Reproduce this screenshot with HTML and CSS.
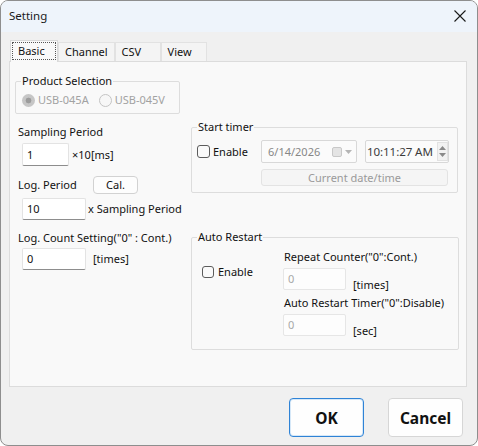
FILE: index.html
```html
<!DOCTYPE html>
<html lang="en">
<head>
<meta charset="UTF-8">
<title>Setting</title>
<link rel="stylesheet" href="styles.css">
</head>
<body>

<div class="window">
  <div class="titlebar">
    <span class="title">Setting</span>
    <svg class="close" width="12" height="12" viewBox="0 0 12 12">
      <path d="M0.5 0.5 L11.5 11.5 M11.5 0.5 L0.5 11.5" stroke="#1a1a1a" stroke-width="1.1" fill="none"/>
    </svg>
  </div>

  <div class="client">
    <div class="tabs">
      <div class="tab active"><span class="focus">Basic</span></div>
      <div class="tab">Channel</div>
      <div class="tab">CSV</div>
      <div class="tab">View</div>
    </div>

    <div class="panel">
      <div class="col-left">
        <div class="group product">
          <div class="legend">Product Selection</div>
          <div class="radios">
            <span class="radio checked"></span><span class="dim">USB-045A</span>
            <span class="radio second"></span><span class="dim">USB-045V</span>
          </div>
        </div>

        <div class="label first">Sampling Period</div>
        <div class="field">
          <div class="input w-small">1</div>
          <span class="suffix">×10[ms]</span>
        </div>

        <div class="label-row">
          <span class="label-inline">Log. Period</span>
          <button class="cal">Cal.</button>
        </div>
        <div class="field tight">
          <div class="input w-mid">10</div>
          <span class="suffix near">x Sampling Period</span>
        </div>

        <div class="label">Log. Count Setting("0" : Cont.)</div>
        <div class="field close-top">
          <div class="input w-mid">0</div>
          <span class="suffix far">[times]</span>
        </div>
      </div>

      <div class="col-right">
        <div class="group timer">
          <div class="legend">Start timer</div>
          <div class="timer-row">
            <label class="check"><span class="box"></span>Enable</label>
            <div class="picker date">
              <span class="date-text">6/14/2026</span>
              <span class="cal-icon"></span>
              <svg class="drop" width="7" height="4" viewBox="0 0 7 4"><path d="M0 0 L7 0 L3.5 4 Z" fill="#b5b5b5"/></svg>
            </div>
            <div class="picker time">
              <span class="time-text">10:11:27 AM</span>
              <div class="spin">
                <svg width="7" height="4" viewBox="0 0 7 4"><path d="M0 4 L7 4 L3.5 0 Z" fill="#8a8a8a"/></svg>
                <svg width="7" height="4" viewBox="0 0 7 4"><path d="M0 0 L7 0 L3.5 4 Z" fill="#8a8a8a"/></svg>
              </div>
            </div>
          </div>
          <div class="now-btn">Current date/time</div>
        </div>

        <div class="group restart">
          <div class="legend">Auto Restart</div>
          <div class="restart-body">
            <label class="check restart-check"><span class="box"></span>Enable</label>
            <div class="restart-fields">
              <div class="label-plain">Repeat Counter("0":Cont.)</div>
              <div class="field bottom">
                <div class="input disabled">0</div>
                <span class="suffix low">[times]</span>
              </div>
              <div class="label-plain second">Auto Restart Timer("0":Disable)</div>
              <div class="field bottom">
                <div class="input disabled">0</div>
                <span class="suffix low">[sec]</span>
              </div>
            </div>
          </div>
        </div>
      </div>
    </div>

    <div class="footer">
      <button class="btn ok">OK</button>
      <button class="btn">Cancel</button>
    </div>
  </div>
</div>

</body>
</html>
```

FILE: styles.css
```css
* {
  box-sizing: border-box;
}

body {
  margin: 0;
  background: #fff;
  font-family: "Noto Sans", "Open Sans", sans-serif;
  font-size: 11px;
  line-height: 16px;
  color: #111;
}

.window {
  width: 478px;
  height: 446px;
  border: 1px solid #8e8e8e;
  border-radius: 8px;
  background: #f0f0f0;
  overflow: hidden;
  display: flex;
  flex-direction: column;
}

.titlebar {
  height: 31px;
  flex: none;
  background: #eef4fb;
  display: flex;
  align-items: center;
  justify-content: space-between;
  padding: 0 11px 2px 8px;
}

.title {
  font-size: 11.5px;
  color: #1a1a1a;
}

.client {
  flex: 1;
  padding: 8px 10px 0 8px;
  display: flex;
  flex-direction: column;
}

/* tabs */
.tabs {
  display: flex;
  align-items: flex-end;
  height: 21px;
  padding-left: 1px;
}

.tab {
  height: 19px;
  min-width: 46px;
  padding: 1px 6px 0 6px;
  background: #f4f4f4;
  border: 1px solid #e2e2e2;
  border-bottom: none;
  color: #111;
}

.tab.active {
  width: 48px;
  height: 22px;
  padding: 1px;
  background: #f9f9f9;
  border-color: #d9d9d9;
  position: relative;
  z-index: 1;
  margin-bottom: -1px;
}

.focus {
  display: block;
  height: 18px;
  padding-left: 5px;
  border: 1px dotted #555;
  line-height: 15px;
}

.panel {
  height: 326px;
  background: #f9f9f9;
  border: 1px solid #dcdcdc;
  display: flex;
  padding-left: 5px;
}

/* group boxes */
.group {
  border: 1px solid #dddddd;
  border-radius: 2px;
}

.legend {
  display: table;
  margin: -9px 0 0 5px;
  padding: 0 1px;
  background: #f9f9f9;
  color: #111;
}

.col-left {
  width: 176px;
}

.product {
  width: 165px;
  height: 33px;
  margin-top: 19px;
}

.radios {
  display: flex;
  align-items: center;
  height: 16px;
  margin-top: 3px;
  padding-left: 6px;
}

.radio {
  width: 13px;
  height: 13px;
  border-radius: 50%;
  border: 1px solid #c4c4c4;
  background: #f7f7f7;
  margin-right: 3px;
}

.radio.checked {
  border: none;
  background: radial-gradient(circle, #9c9c9c 0 2.6px, #c6c6c6 3.2px);
}

.radio.second {
  margin-left: 10px;
}

.dim {
  color: #a2a2a2;
}

.label {
  margin: 10px 0 0 3px;
}

.field {
  display: flex;
  align-items: center;
  margin-top: 3px;
  padding-left: 7px;
}

.field.tight {
  margin-top: 4px;
}

.field.close-top {
  margin-top: 2px;
}

.input {
  height: 23px;
  width: 63px;
  padding: 3px 0 0 4px;
  background: #fff;
  border: 1px solid #e3e3e3;
  border-bottom-color: #8d8d8d;
  border-radius: 2px;
  color: #111;
}

.input.w-small {
  width: 47px;
}

.input.w-mid {
  width: 64px;
  height: 22px;
  padding-top: 2px;
}

.suffix {
  margin-left: 3px;
}

.suffix.near {
  margin-left: 2px;
}

.suffix.far {
  margin-left: 7px;
}

.label-row {
  display: flex;
  align-items: center;
  margin: 10px 0 0 3px;
}

.label-inline {
  width: 75px;
}

.cal {
  width: 45px;
  height: 18px;
  padding: 0;
  font: inherit;
  line-height: 14px;
  color: #111;
  background: #fdfdfd;
  border: 1px solid #d2d2d2;
  border-radius: 4px;
}

/* right side */
.col-right {
  width: 268px;
}

.timer {
  width: 267px;
  height: 66px;
  margin-top: 65px;
  padding-left: 5px;
}

.timer .legend {
  margin-left: 0;
}

.timer-row {
  display: flex;
  align-items: center;
  margin-top: 5px;
}

.check {
  display: flex;
  align-items: center;
  width: 64px;
}

.box {
  width: 13px;
  height: 13px;
  border: 1px solid #5c5c5c;
  border-radius: 3px;
  background: #fafafa;
  margin-right: 3px;
}

.picker {
  height: 23px;
  display: flex;
  align-items: center;
  background: #fbfbfb;
  border: 1px solid #d8d8d8;
  border-radius: 2px;
}

.date {
  width: 96px;
  padding-left: 6px;
  color: #878787;
}

.date-text {
  width: 64px;
}

.cal-icon {
  width: 10px;
  height: 10px;
  border: 1px solid #c8c8c8;
  border-radius: 2px;
  background: #e4e4e4;
}

.drop {
  margin-left: 3px;
}

.time {
  width: 84px;
  margin-left: 8px;
  padding-left: 1px;
  color: #3c3c3c;
  overflow: hidden;
}

.time-text {
  width: 70px;
  white-space: nowrap;
  overflow: hidden;
  font-size: 11.6px;
  letter-spacing: -0.1px;
}

.spin {
  display: flex;
  flex-direction: column;
  align-items: center;
  justify-content: center;
  gap: 3px;
  width: 11px;
  height: 19px;
  border: 1px solid #e2e2e2;
  background: #f2f2f2;
}

.now-btn {
  width: 187px;
  height: 17px;
  margin: 6px 0 0 64px;
  background: #f5f5f5;
  border: 1px solid #e3e3e3;
  border-radius: 3px;
  color: #9a9a9a;
  text-align: center;
  line-height: 15px;
}

.restart {
  width: 268px;
  height: 113px;
  margin-top: 44px;
}

.restart-body {
  display: flex;
}

.restart-check {
  width: 91px;
  height: 16px;
  margin-top: 19px;
  padding-left: 10px;
}

.restart-check .box {
  width: 12px;
  height: 12px;
  margin-right: 4px;
}

.restart-fields {
  flex: 1;
}

.label-plain {
  margin-top: 4px;
  margin-left: 1px;
}

.label-plain.second {
  margin-top: 5px;
}

.field.bottom {
  align-items: flex-end;
  padding-left: 0;
}

.input.disabled {
  width: 63px;
  height: 22px;
  padding-top: 2px;
  border-color: #e6e6e6;
  background: #fdfdfd;
  color: #a8a8a8;
}

.suffix.low {
  margin: 0 0 -3px 7px;
}

/* dialog buttons */
.footer {
  display: flex;
  justify-content: flex-end;
  gap: 24px;
  margin-top: 11px;
  padding-right: 4px;
}

.btn {
  width: 75px;
  height: 39px;
  padding: 0;
  font-family: inherit;
  font-size: 15.5px;
  font-weight: bold;
  color: #111;
  background: #fefefe;
  border: 1px solid #d6d6d6;
  border-radius: 4px;
}

.btn.ok {
  border-color: #2f83d6;
  box-shadow: inset 0 0 0 1px #d6e8f8;
}
```
